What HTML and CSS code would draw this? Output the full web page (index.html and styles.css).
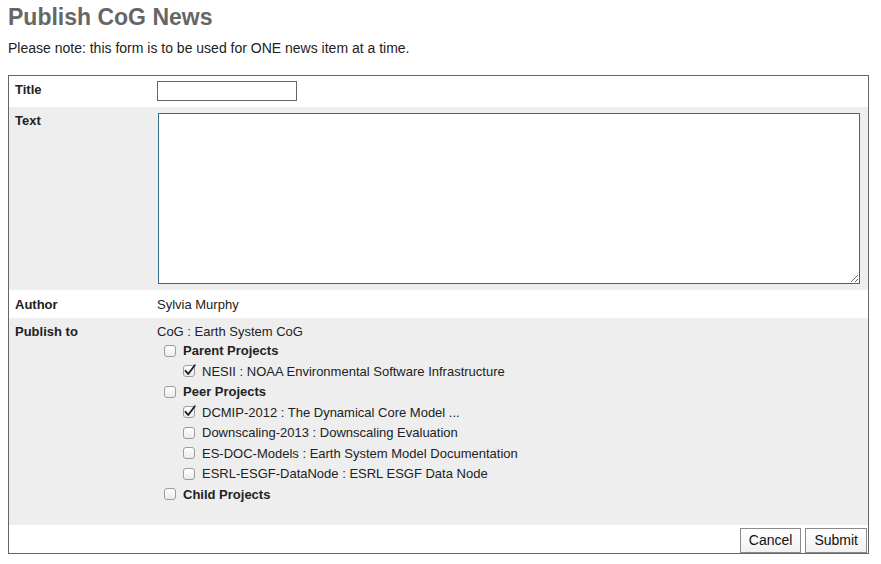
FILE: index.html
```html
<!DOCTYPE html>
<html>
<head>
<meta charset="utf-8">
<link rel="stylesheet" href="styles.css">
</head>
<body>
<div class="page">
  <h1 class="title">Publish CoG News</h1>
  <p class="note">Please note: this form is to be used for ONE news item at a time.</p>
  <table class="form">
    <tr class="row white">
      <th class="label">Title</th>
      <td class="value pad5"><input type="text" class="title-input"></td>
    </tr>
    <tr class="row gray">
      <th class="label">Text</th>
      <td class="value pad6"><textarea class="text-area"></textarea></td>
    </tr>
    <tr class="row white">
      <th class="label author">Author</th>
      <td class="value author">Sylvia Murphy</td>
    </tr>
    <tr class="row gray">
      <th class="label publish">Publish to</th>
      <td class="value publish">
        <div class="line">CoG : Earth System CoG</div>
        <ul class="tree">
          <li class="item lvl1"><span class="cb"></span><b>Parent Projects</b></li>
          <li class="item lvl2"><span class="cb"><svg class="tick" width="14" height="14" viewBox="0 0 14 14"><path d="M2.5 6.8 L5.2 10 L11.8 1.2" fill="none" stroke="#222" stroke-width="1.9" stroke-linecap="round" stroke-linejoin="round"/></svg></span>NESII : NOAA Environmental Software Infrastructure</li>
          <li class="item lvl1"><span class="cb"></span><b>Peer Projects</b></li>
          <li class="item lvl2"><span class="cb"><svg class="tick" width="14" height="14" viewBox="0 0 14 14"><path d="M2.5 6.8 L5.2 10 L11.8 1.2" fill="none" stroke="#222" stroke-width="1.9" stroke-linecap="round" stroke-linejoin="round"/></svg></span>DCMIP-2012 : The Dynamical Core Model ...</li>
          <li class="item lvl2"><span class="cb"></span>Downscaling-2013 : Downscaling Evaluation</li>
          <li class="item lvl2"><span class="cb"></span>ES-DOC-Models : Earth System Model Documentation</li>
          <li class="item lvl2"><span class="cb"></span>ESRL-ESGF-DataNode : ESRL ESGF Data Node</li>
          <li class="item lvl1"><span class="cb"></span><b>Child Projects</b></li>
        </ul>
      </td>
    </tr>
    <tr class="row white">
      <td class="actions" colspan="2">
        <div class="buttons">
          <button class="btn">Cancel</button>
          <button class="btn">Submit</button>
        </div>
      </td>
    </tr>
  </table>
</div>
</body>
</html>
```

FILE: styles.css
```css
html, body {
  margin: 0;
  padding: 0;
  background: #fff;
}
body {
  font-family: "Liberation Sans", Arial, sans-serif;
  font-size: 13px;
  color: #222;
}
.page {
  padding: 4px 8px 0 8px;
}
.title {
  margin: 0;
  font-size: 23px;
  line-height: 26px;
  font-weight: bold;
  color: #666;
}
.note {
  margin: 10px 0 0 0;
  line-height: 16px;
  font-size: 14px;
}
.form {
  margin-top: 19px;
  width: 861px;
  border-collapse: collapse;
  border: 1px solid #666;
}
.row.white { background: #fff; }
.row.gray { background: #eee; }
.label {
  width: 136px;
  text-align: left;
  vertical-align: top;
  font-weight: bold;
  color: #222;
  padding: 6px 6px 0 6px;
  line-height: 15px;
}
.value {
  vertical-align: top;
  padding: 0;
  line-height: 15px;
}
.pad5 { padding: 5px 0 6px 0; }
.pad6 { padding: 6px 0 6px 0; }
.title-input {
  display: block;
  box-sizing: border-box;
  width: 140px;
  height: 20px;
  margin: 0;
  border: 1px solid #666;
  padding: 0 3px;
  background: #fff;
}
.text-area {
  display: block;
  box-sizing: border-box;
  width: 702px;
  height: 171px;
  margin: 0 0 0 1px;
  border: 1px solid #356b86;
  padding: 2px;
  background: #fff;
  font-family: "Liberation Sans", Arial, sans-serif;
  font-size: 13px;
  resize: both;
}
.label.author, .value.author {
  padding-top: 7px;
  padding-bottom: 6px;
}
.label.publish {
  padding-top: 4px;
  line-height: 20.5px;
}
.value.publish {
  padding-top: 3px;
  padding-bottom: 20px;
}
.line {
  line-height: 20.5px;
  height: 19.5px;
  padding-top: 1px;
  box-sizing: border-box;
}
.tree {
  list-style: none;
  margin: 0;
  padding: 0;
}
.item {
  display: flex;
  align-items: center;
  height: 20.5px;
}
.item b { color: #222; }
.lvl1 { padding-left: 7px; }
.lvl2 { padding-left: 26px; }
.cb {
  position: relative;
  flex: none;
  box-sizing: border-box;
  width: 12px;
  height: 12px;
  margin-right: 7px;
  border: 1px solid #9c9c9c;
  border-radius: 3px;
  background: linear-gradient(#ffffff, #ececec);
}
.tick {
  position: absolute;
  left: -1px;
  top: -2px;
  overflow: visible;
}
.actions {
  padding: 3px 1px 0 0;
}
.buttons {
  display: flex;
  justify-content: flex-end;
  gap: 4px;
}
.btn {
  box-sizing: border-box;
  height: 25px;
  margin: 0;
  padding: 0 8px;
  font-family: "Liberation Sans", Arial, sans-serif;
  font-size: 14px;
  color: #111;
  background: linear-gradient(#ffffff, #f1f1f1);
  border: 1px solid #8a8a8a;
  border-radius: 0;
}
```
